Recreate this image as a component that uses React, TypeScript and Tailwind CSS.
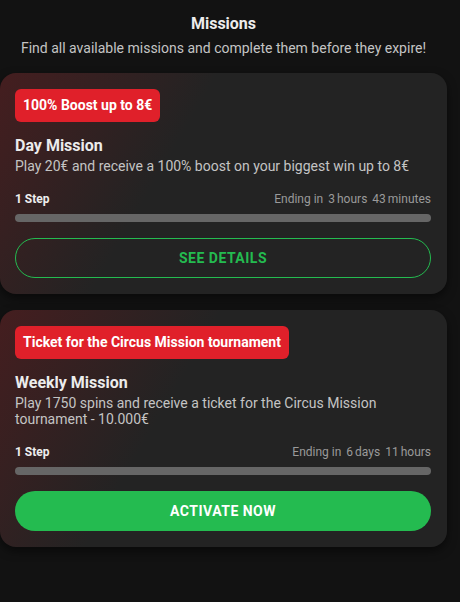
interface MissionCardProps {
  badge: string;
  title: string;
  description: string;
  ending: [string, string][];
  action: string;
  filled?: boolean;
}

const MissionCard: React.FC<MissionCardProps> = ({
  badge,
  title,
  description,
  ending,
  action,
  filled,
}) => {
  return (
    <div className="rounded-2xl bg-[#232323] bg-[linear-gradient(120deg,rgba(80,28,30,0.75)_0%,rgba(35,35,35,0)_38%)] pl-[15px] pr-4 pt-4 pb-4 shadow-[0_4px_10px_rgba(0,0,0,0.5)]">
      <div className="inline-flex h-[33px] items-center rounded-md bg-[#e0202a] px-2 text-[14px] font-bold text-white">
        {badge}
      </div>
      <div className="mt-[14px] text-[16px] font-bold leading-5 text-[#ececec]">
        {title}
      </div>
      <p className="mt-[2px] text-[14px] leading-[16px] text-[#c4c4c4]">
        {description}
      </p>
      <div className="mt-[17px] flex items-center justify-between text-[12px] leading-4">
        <span className="font-bold text-[#eee]">1 Step</span>
        <span className="flex gap-[5px] text-[#9a9a9a]">
          <span>Ending in</span>
          {ending.map(([n, unit]) => (
            <span key={unit} className="flex gap-[2px]">
              <span>{n}</span>
              <span>{unit}</span>
            </span>
          ))}
        </span>
      </div>
      <div className="mt-[7px] h-2 w-full rounded-full bg-[#666]"></div>
      <button
        className={
          filled
            ? "mt-[16px] flex h-[40px] w-full items-center justify-center rounded-full bg-[#24bb50] text-[14px] font-bold tracking-[0.5px] text-white"
            : "mt-[16px] flex h-[40px] w-full items-center justify-center rounded-full border border-[#24bb50] text-[14px] font-bold tracking-[0.5px] text-[#24bb50]"
        }
      >
        {action}
      </button>
    </div>
  );
};

export default function App() {
  return (
    <div className="min-h-[602px] w-full bg-[#121212] font-['Roboto',sans-serif]">
      <div className="w-[447px] pt-[14px]">
        <h1 className="text-center text-[16px] font-bold leading-5 text-[#ececec]">
          Missions
        </h1>
        <p className="mt-[6px] text-center text-[14px] leading-4 text-[#c4c4c4]">
          Find all available missions and complete them before they expire!
        </p>
        <div className="mt-[17px] flex flex-col gap-4">
          <MissionCard
            badge="100% Boost up to 8€"
            title="Day Mission"
            description="Play 20€ and receive a 100% boost on your biggest win up to 8€"
            ending={[
              ["3", "hours"],
              ["43", "minutes"],
            ]}
            action="SEE DETAILS"
          />
          <MissionCard
            badge="Ticket for the Circus Mission tournament"
            title="Weekly Mission"
            description="Play 1750 spins and receive a ticket for the Circus Mission tournament - 10.000€"
            ending={[
              ["6", "days"],
              ["11", "hours"],
            ]}
            action="ACTIVATE NOW"
            filled
          />
        </div>
      </div>
    </div>
  );
}
